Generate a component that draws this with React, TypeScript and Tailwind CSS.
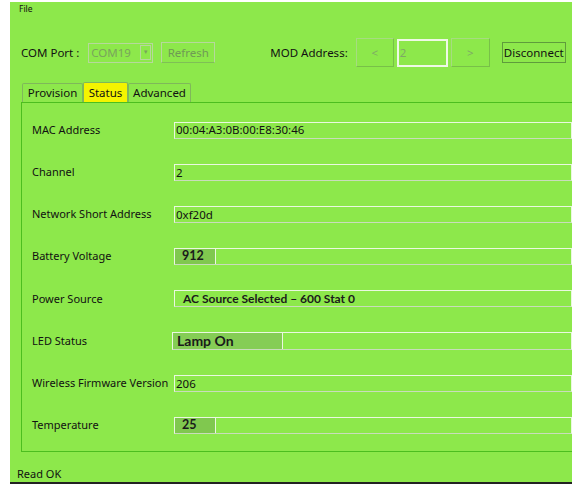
import React from 'react';

const ui = { fontFamily: '"Noto Sans", "Open Sans", sans-serif' };
const bold = { fontFamily: 'Lato, "Noto Sans", sans-serif' };

type Row = { label: string; value: string; kind?: 'plain' | 'bar' | 'big' };

const rows: Row[] = [
  { label: 'MAC Address', value: '00:04:A3:0B:00:E8:30:46' },
  { label: 'Channel', value: '2' },
  { label: 'Network Short Address', value: '0xf20d' },
  { label: 'Battery Voltage', value: '912', kind: 'bar' },
  { label: 'Power Source', value: 'AC Source Selected – 600 Stat 0', kind: 'bar' },
  { label: 'LED Status', value: 'Lamp On', kind: 'big' },
  { label: 'Wireless Firmware Version', value: '206' },
  { label: 'Temperature', value: '25', kind: 'bar' },
];

const ValueBox: React.FC<{ row: Row }> = ({ row }) => {
  if (row.kind === 'big') {
    return (
      <div className="ml-[-2px] flex h-[18px] flex-1 border border-[#eaf8e0] border-b-[#c9dcbc]">
        <div className="flex w-[109px] items-center bg-[#85cd55] pl-[4px] text-[14px] font-bold text-[#1a1a1a]" style={bold}>
          {row.value}
        </div>
        <div className="flex-1 border-l border-[#eaf8e0]" />
      </div>
    );
  }
  if (row.kind === 'bar') {
    const wide = row.value.length > 5;
    return (
      <div className="flex h-[17px] flex-1 border border-[#eaf8e0] border-b-[#c9dcbc]">
        <div
          className={
            wide
              ? 'flex flex-1 items-center pl-[8px] text-[12px] font-bold text-[#1a1a1a]'
              : 'flex w-[40px] items-center bg-[#80c84f] pl-[7px] text-[12.5px] font-bold text-[#1a1a1a]'
          }
          style={bold}
        >
          {row.value}
        </div>
        {!wide && <div className="flex-1 border-l border-[#eaf8e0]" />}
      </div>
    );
  }
  return (
    <div className="flex h-[17px] flex-1 items-center border border-[#eaf8e0] border-b-[#c9dcbc] pl-[1px] text-[11.5px] text-[#111]">
      {row.value}
    </div>
  );
};

export default function App() {
  return (
    <div className="h-[484px] w-[572px] overflow-hidden bg-white pl-[10px] pt-[2px]" style={ui}>
      <div className="flex h-[480px] flex-col bg-[#8de84b]">
        {/* menu */}
        <div className="h-[18px] pl-[9px] pt-[3px] text-[8.5px] leading-none text-[#111]">File</div>

        {/* toolbar */}
        <div className="mt-[18px] flex h-[30px] items-center text-[11.5px] text-[#111]">
          <span className="ml-[11px]">COM Port :</span>
          <div className="ml-[9px] flex h-[20px] w-[65px] items-center border border-[#b6d89c] text-[#79a45c]">
            <span className="flex-1 pl-[2px]">COM19</span>
            <span className="mr-[1px] flex h-[15px] w-[11px] items-center justify-center border border-[#b6d89c] text-[6px]">▼</span>
          </div>
          <div className="ml-[8px] flex h-[21px] w-[54px] items-center justify-center border border-[#b6d89c] border-b-[#7fbf56] text-[#6f9a55]">
            Refresh
          </div>
          <span className="ml-[55px]">MOD Address:</span>
          <div className="ml-[8px] flex h-[29px] w-[38px] items-center justify-center border border-[#a6dc80] border-b-[#78c048] border-r-[#78c048] text-[#7ea866]">
            &lt;
          </div>
          <div className="ml-[3px] flex h-[28px] w-[51px] items-center border-2 border-[#eef8e6] pl-[1px] text-[#7ea866]">2</div>
          <div className="ml-[3px] flex h-[29px] w-[39px] items-center justify-center border border-[#a6dc80] border-b-[#78c048] border-r-[#78c048] text-[#7ea866]">
            &gt;
          </div>
          <div className="ml-[12px] flex h-[21px] w-[64px] items-center justify-center border border-[#5f9c3c] text-[#111]">
            Disconnect
          </div>
        </div>

        {/* tabs */}
        <div className="mt-[14px] flex h-[20px] items-end pl-[12px] text-[11.5px] text-[#111]">
          <div className="flex h-[19px] w-[61px] items-center justify-center rounded-t-[2px] border border-b-0 border-[#7fb85a]">Provision</div>
          <div className="flex h-[20px] w-[45px] items-center justify-center rounded-t-[2px] border border-b-0 border-[#7fb85a] bg-[#f4f400]">Status</div>
          <div className="flex h-[19px] w-[63px] items-center justify-center rounded-t-[2px] border border-b-0 border-[#7fb85a]">Advanced</div>
        </div>

        {/* panel */}
        <div className="ml-[11px] h-[350px] border-l border-t border-b border-[#4cbe1f] pl-[10px] pt-[6px]">
          {rows.map(r => (
            <div key={r.label} className="flex h-[42.2px] items-center text-[11px] text-[#111]">
              <span className="w-[142px] shrink-0 whitespace-nowrap">{r.label}</span>
              <ValueBox row={r} />
            </div>
          ))}
        </div>

        {/* status bar */}
        <div className="flex flex-1 items-center pl-[7px] pt-[14px] text-[11px] text-[#111]">Read OK</div>
      </div>
      <div className="h-[2px] bg-[#222]" />
    </div>
  );
}
